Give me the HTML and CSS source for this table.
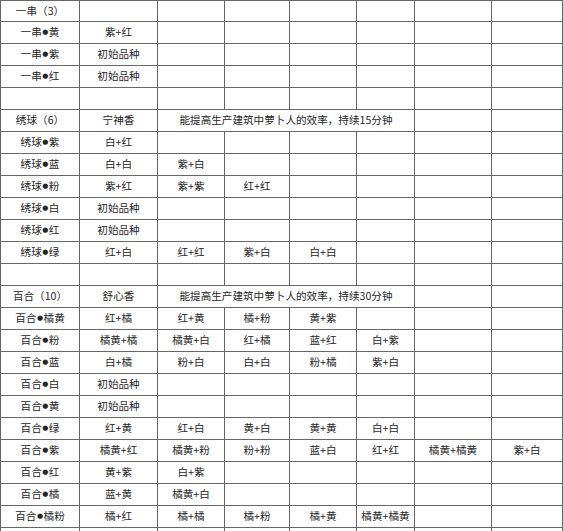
FILE: index.html
```html
<!DOCTYPE html>
<html lang="zh-CN">
<head>
<meta charset="utf-8">
<title>花卉培育表</title>
<link rel="stylesheet" href="styles.css">
</head>
<body>
<div class="sheet">
  <div class="c">一串（3）</div><div class="c"></div><div class="c"></div><div class="c"></div><div class="c"></div><div class="c"></div><div class="c"></div><div class="c"></div>
  <div class="c">一串<span class="dot">●</span>黄</div><div class="c">紫+红</div><div class="c"></div><div class="c"></div><div class="c"></div><div class="c"></div><div class="c"></div><div class="c"></div>
  <div class="c">一串<span class="dot">●</span>紫</div><div class="c">初始品种</div><div class="c"></div><div class="c"></div><div class="c"></div><div class="c"></div><div class="c"></div><div class="c"></div>
  <div class="c">一串<span class="dot">●</span>红</div><div class="c">初始品种</div><div class="c"></div><div class="c"></div><div class="c"></div><div class="c"></div><div class="c"></div><div class="c"></div>
  <div class="c"></div><div class="c"></div><div class="c"></div><div class="c"></div><div class="c"></div><div class="c"></div><div class="c"></div><div class="c"></div>

  <div class="c">绣球（6）</div><div class="c">宁神香</div><div class="c span4">能提高生产建筑中萝卜人的效率，持续15分钟</div><div class="c"></div><div class="c"></div>
  <div class="c">绣球<span class="dot">●</span>紫</div><div class="c">白+红</div><div class="c"></div><div class="c"></div><div class="c"></div><div class="c"></div><div class="c"></div><div class="c"></div>
  <div class="c">绣球<span class="dot">●</span>蓝</div><div class="c">白+白</div><div class="c">紫+白</div><div class="c"></div><div class="c"></div><div class="c"></div><div class="c"></div><div class="c"></div>
  <div class="c">绣球<span class="dot">●</span>粉</div><div class="c">紫+红</div><div class="c">紫+紫</div><div class="c">红+红</div><div class="c"></div><div class="c"></div><div class="c"></div><div class="c"></div>
  <div class="c">绣球<span class="dot">●</span>白</div><div class="c">初始品种</div><div class="c"></div><div class="c"></div><div class="c"></div><div class="c"></div><div class="c"></div><div class="c"></div>
  <div class="c">绣球<span class="dot">●</span>红</div><div class="c">初始品种</div><div class="c"></div><div class="c"></div><div class="c"></div><div class="c"></div><div class="c"></div><div class="c"></div>
  <div class="c">绣球<span class="dot">●</span>绿</div><div class="c">红+白</div><div class="c">红+红</div><div class="c">紫+白</div><div class="c">白+白</div><div class="c"></div><div class="c"></div><div class="c"></div>
  <div class="c"></div><div class="c"></div><div class="c"></div><div class="c"></div><div class="c"></div><div class="c"></div><div class="c"></div><div class="c"></div>

  <div class="c">百合（10）</div><div class="c">舒心香</div><div class="c span4">能提高生产建筑中萝卜人的效率，持续30分钟</div><div class="c"></div><div class="c"></div>
  <div class="c">百合<span class="dot">●</span>橘黄</div><div class="c">红+橘</div><div class="c">红+黄</div><div class="c">橘+粉</div><div class="c">黄+紫</div><div class="c"></div><div class="c"></div><div class="c"></div>
  <div class="c">百合<span class="dot">●</span>粉</div><div class="c">橘黄+橘</div><div class="c">橘黄+白</div><div class="c">红+橘</div><div class="c">蓝+红</div><div class="c">白+紫</div><div class="c"></div><div class="c"></div>
  <div class="c">百合<span class="dot">●</span>蓝</div><div class="c">白+橘</div><div class="c">粉+白</div><div class="c">白+白</div><div class="c">粉+橘</div><div class="c">紫+白</div><div class="c"></div><div class="c"></div>
  <div class="c">百合<span class="dot">●</span>白</div><div class="c">初始品种</div><div class="c"></div><div class="c"></div><div class="c"></div><div class="c"></div><div class="c"></div><div class="c"></div>
  <div class="c">百合<span class="dot">●</span>黄</div><div class="c">初始品种</div><div class="c"></div><div class="c"></div><div class="c"></div><div class="c"></div><div class="c"></div><div class="c"></div>
  <div class="c">百合<span class="dot">●</span>绿</div><div class="c">红+黄</div><div class="c">红+白</div><div class="c">黄+白</div><div class="c">黄+黄</div><div class="c">白+白</div><div class="c"></div><div class="c"></div>
  <div class="c">百合<span class="dot">●</span>紫</div><div class="c">橘黄+红</div><div class="c">橘黄+粉</div><div class="c">粉+粉</div><div class="c">蓝+白</div><div class="c">红+红</div><div class="c">橘黄+橘黄</div><div class="c">紫+白</div>
  <div class="c">百合<span class="dot">●</span>红</div><div class="c">黄+紫</div><div class="c">白+紫</div><div class="c"></div><div class="c"></div><div class="c"></div><div class="c"></div><div class="c"></div>
  <div class="c">百合<span class="dot">●</span>橘</div><div class="c">蓝+黄</div><div class="c">橘黄+白</div><div class="c"></div><div class="c"></div><div class="c"></div><div class="c"></div><div class="c"></div>
  <div class="c">百合<span class="dot">●</span>橘粉</div><div class="c">橘+红</div><div class="c">橘+橘</div><div class="c">橘+粉</div><div class="c">橘+黄</div><div class="c">橘黄+橘黄</div><div class="c"></div><div class="c"></div>
  <div class="c"></div><div class="c"></div><div class="c"></div><div class="c"></div><div class="c"></div><div class="c"></div><div class="c"></div><div class="c"></div>
</div>
</body>
</html>
```

FILE: styles.css
```css
html, body {
  margin: 0;
  padding: 0;
  background: #ffffff;
  overflow: hidden;
}

.sheet {
  display: grid;
  grid-template-columns: 79px 78px 67px 65px 67px 58px 77px 71px;
  grid-template-rows: 21px;
  grid-auto-rows: 22px;
  width: 563px;
  box-sizing: border-box;
  border-left: 1px solid #666;
  border-top: 1px solid #666;
  font-family: "Noto Sans CJK SC", sans-serif;
  font-size: 10.6px;
  color: #262626;
}

.c {
  box-sizing: border-box;
  border-right: 1px solid #666;
  border-bottom: 1px solid #666;
  display: flex;
  align-items: center;
  justify-content: center;
  white-space: nowrap;
  line-height: 1;
  overflow: hidden;
}

.span4 {
  grid-column: span 4;
}

.dot {
  font-family: "DejaVu Sans", sans-serif;
  font-size: 7px;
  padding: 0 0.5px;
}
```
